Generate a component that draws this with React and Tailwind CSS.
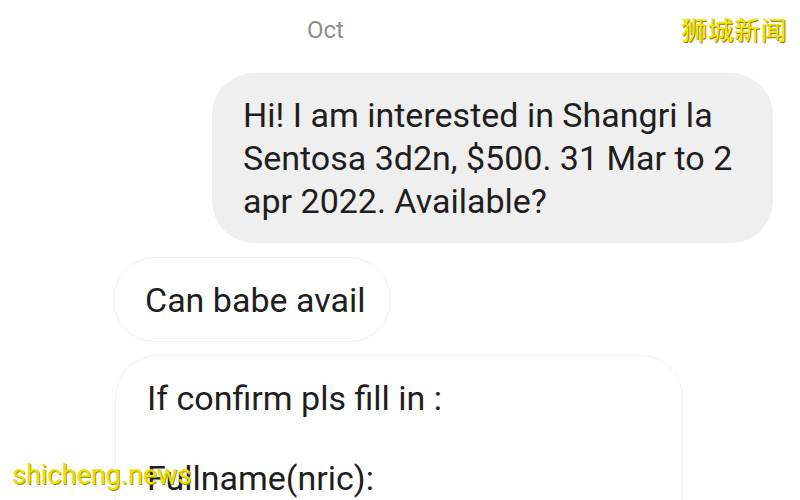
import React from "react"

const font = { fontFamily: "Roboto, 'Noto Sans', sans-serif" }

export default function App() {
  return (
    <div className="relative h-[500px] w-[800px] overflow-hidden bg-white" style={font}>
      <div className="pt-[16px] pl-[307px] text-[24px] leading-[28px] text-[#8e8e8e]">Oct</div>

      <div className="mt-[29px] ml-[212px] w-[561px] rounded-[42px] bg-[#efefef] pt-[21px] pb-[20px] pl-[31px] text-[34px] leading-[43px] text-[#1e1e1e]">
        <div>Hi! I am interested in Shangri la</div>
        <div>Sentosa 3d2n, $500. 31 Mar to 2</div>
        <div>apr 2022. Available?</div>
      </div>

      <div className="mt-[14px] ml-[113px] w-fit rounded-[42px] border border-[#f1f1f1] pt-[21px] pb-[19px] pl-[31px] pr-[25px] text-[34px] leading-[43px] text-[#1e1e1e]">
        Can babe avail
      </div>

      <div className="mt-[13px] ml-[115px] h-[200px] w-[568px] rounded-[42px] border border-[#f3f3f3] pt-[22px] pl-[31px] text-[34px] leading-[40px] text-[#1e1e1e]">
        <div>If confirm pls fill in :</div>
        <div className="h-[40px]" />
        <div>Fullname(nric):</div>
      </div>

      <div
        className="absolute top-[14px] left-[681px] text-[26px] leading-[30px] tracking-[0.5px] text-[#f3e600]"
        style={{ fontFamily: "'Noto Sans CJK SC', sans-serif", textShadow: "1px 1px 1px #7a6a00" }}
      >
        狮城新闻
      </div>
      <div
        className="absolute top-[458px] left-[12px] text-[27px] leading-[34px] text-[#eee000]"
        style={{ textShadow: "1px 1px 0 #a09000" }}
      >
        shicheng.news
      </div>
    </div>
  )
}
